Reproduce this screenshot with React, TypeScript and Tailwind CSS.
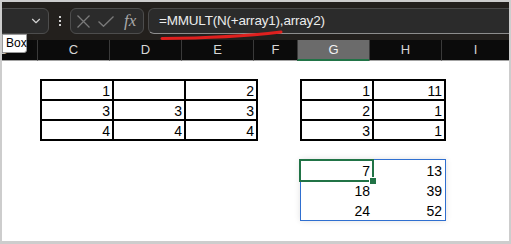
import React from "react";
import { ChevronDown } from "lucide-react";

const font = { fontFamily: '"Liberation Sans", Arial, sans-serif' };

function HeaderCell({ label, w, active }: { label: string; w: string; active?: boolean }) {
  return (
    <div
      className={`${w} shrink-0 h-[21px] flex items-center justify-center border-l border-l-[#3a3a3a] text-[13px] leading-[20px] ${
        active
          ? "bg-[#6b6b6b] text-[#f2f2f2] border-b-2 border-b-[#217346]"
          : "text-[#d6d6d6] border-b border-b-[#a3a3a3]"
      }`}
    >
      {label}
    </div>
  );
}

function Table({ rows }: { rows: string[][] }) {
  const cols = rows[0].length;
  return (
    <div
      className={`grid gap-[2px] bg-black p-[2px] auto-rows-[18px] ${
        cols === 3 ? "grid-cols-[70px_70px_70px]" : "grid-cols-[70px_70px]"
      }`}
    >
      {rows.flat().map((v, i) => (
        <div key={i} className="bg-white h-[18px] text-right pr-[2px] text-[14px] leading-[20px] text-black">
          {v}
        </div>
      ))}
    </div>
  );
}

export default function App() {
  const result = [
    ["7", "13"],
    ["18", "39"],
    ["24", "52"],
  ];
  return (
    <div className="w-[511px] h-[244px] bg-[#cdcdcd] pt-[2px] pl-[2px] pr-[2px] pb-[3px] flex flex-col" style={font}>
      <div className="flex-1 flex flex-col relative overflow-hidden">
        {/* toolbar */}
        <div className="h-[38px] shrink-0 bg-[#23201d] flex items-start pt-[6px]">
          <div className="w-[51px] -ml-[4px] h-[26px] rounded-md border border-[#4d4d4d] bg-[#2b2b2b] flex items-center justify-end pr-[5px]">
            <ChevronDown size={14} color="#d0d0d0" strokeWidth={2} />
          </div>
          <div className="ml-[10px] mt-[8px] flex flex-col gap-[2px]">
            <div className="w-[2px] h-[2px] bg-[#d0d0d0]" />
            <div className="w-[2px] h-[2px] bg-[#d0d0d0]" />
            <div className="w-[2px] h-[2px] bg-[#d0d0d0]" />
          </div>
          <div className="ml-[9px] w-[74px] h-[26px] rounded-md border border-[#4d4d4d] bg-[#2b2b2b] flex items-center pl-[6px]">
            <svg width="13" height="13" viewBox="0 0 13 13">
              <path d="M0.5 0.5 L12.5 12.5 M12.5 0.5 L0.5 12.5" stroke="#7a7a7a" strokeWidth="1.3" fill="none" />
            </svg>
            <svg className="ml-[8px]" width="16" height="11" viewBox="0 0 16 11">
              <path d="M0.5 5.5 L5.5 10.3 L15.5 0.5" stroke="#7a7a7a" strokeWidth="1.3" fill="none" />
            </svg>
            <span
              className="ml-[10px] text-[17px] italic leading-[20px] text-[#a8a8a8]"
              style={{ fontFamily: '"Liberation Serif", "Times New Roman", serif' }}
            >
              fx
            </span>
          </div>
          <div className="ml-[4px] flex-1 -mr-[8px] h-[26px] rounded-md border border-[#4a4a4a] border-b-[#8d8d8d] bg-[#2b2b2b] flex items-center pl-[10px]">
            <span className="text-[13.5px] tracking-[-0.2px] text-[#ececec] leading-[20px]">=MMULT(N(+array1),array2)</span>
          </div>
        </div>

        {/* column headers */}
        <div className="h-[21px] shrink-0 bg-[#0b0b0b] flex">
          <div className="w-[38px] shrink-0 h-[21px] border-b border-b-[#a3a3a3] text-[13px] leading-[20px] text-[#d6d6d6] -ml-[3px] pl-0">
            B
          </div>
          <HeaderCell label="C" w="w-[72px]" />
          <HeaderCell label="D" w="w-[72px]" />
          <HeaderCell label="E" w="w-[72px]" />
          <HeaderCell label="F" w="w-[44px]" />
          <HeaderCell label="G" w="w-[72px]" active />
          <HeaderCell label="H" w="w-[72px]" />
          <div className="flex-1 h-[21px] flex items-center justify-center border-l border-l-[#3a3a3a] border-b border-b-[#a3a3a3] text-[13px] leading-[20px] text-[#d6d6d6]">
            I
          </div>
        </div>

        {/* sheet body */}
        <div className="flex-1 bg-white pt-[18px] pl-[38px]">
          <div className="flex gap-[42px]">
            <Table
              rows={[
                ["1", "", "2"],
                ["3", "3", "3"],
                ["4", "4", "4"],
              ]}
            />
            <Table
              rows={[
                ["1", "11"],
                ["2", "1"],
                ["3", "1"],
              ]}
            />
          </div>
          <div className="mt-[18px] ml-[260px] w-[146px] border border-[#2f6fd0] relative shadow-[0_0_6px_rgba(0,0,0,0.12)]">
            <div className="grid grid-cols-[72px_72px]">
              {result.flat().map((v, i) => (
                <div key={i} className="h-[20px] pt-[1px] text-right pr-[3px] text-[14px] leading-[20px] text-black">
                  {v}
                </div>
              ))}
            </div>
            <div className="absolute left-[-2px] top-[-1px] w-[75px] h-[23px] border-2 border-[#217346]" />
            <div className="absolute left-[69px] top-[18px] w-[6px] h-[6px] bg-[#217346] outline outline-1 outline-white" />
          </div>
        </div>

        {/* tooltip */}
        <div className="absolute left-0 top-[32px] w-[25px] h-[19px] bg-white border border-[#9a9a9a] rounded-br-[3px] text-[12px] leading-[17px] pl-[3px] text-black shadow-[0_2px_6px_rgba(0,0,0,0.18)]">
          Box
        </div>

        {/* red annotation stroke */}
        <svg className="absolute left-0 top-0 pointer-events-none" width="509" height="60" viewBox="0 0 509 60">
          <path d="M160 36.5 Q228 36 279 30" stroke="#e0201e" strokeWidth="3" strokeLinecap="round" fill="none" />
        </svg>
      </div>
    </div>
  );
}
